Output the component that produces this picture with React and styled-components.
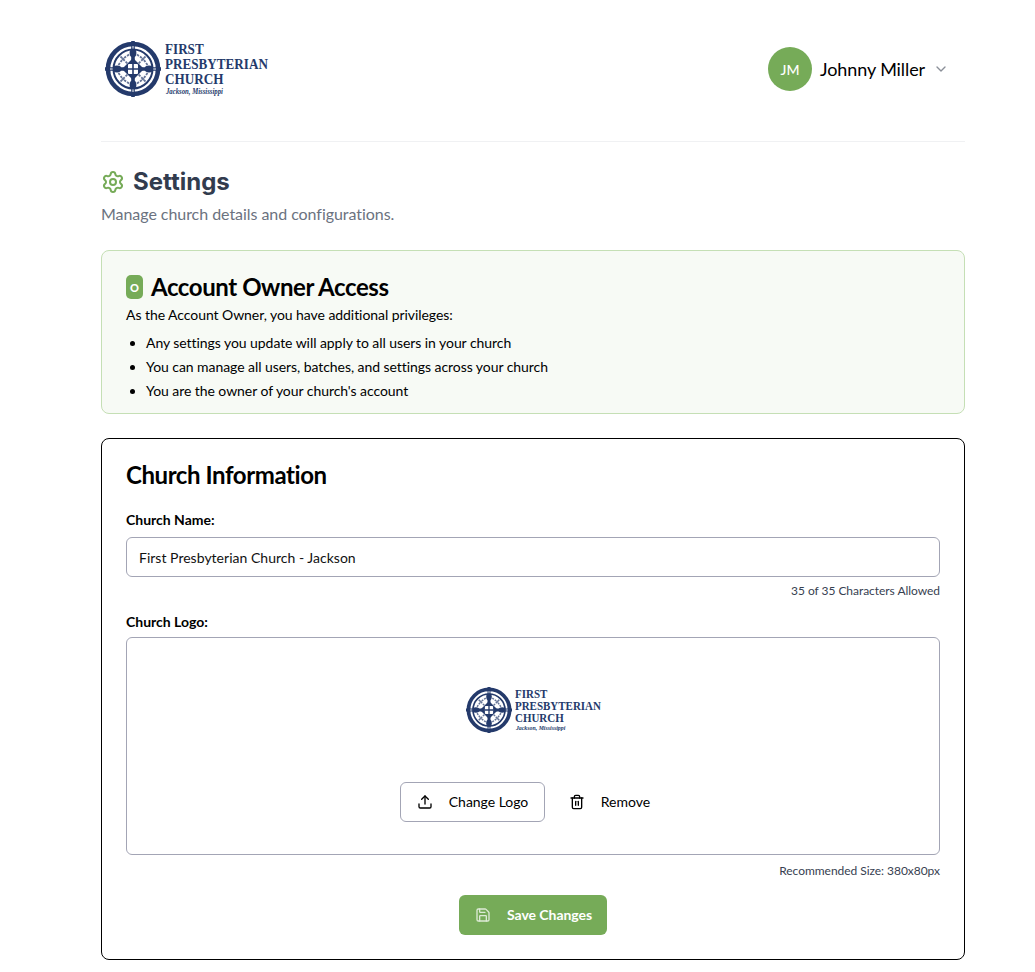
import React from 'react';
import styled, { createGlobalStyle } from 'styled-components';
import { ChevronDown, Settings as SettingsIcon, Upload, Trash2, Save } from 'lucide-react';

const GlobalStyle = createGlobalStyle`
  html, body {
    margin: 0;
    padding: 0;
    background: #fff;
    font-family: Lato, "Liberation Sans", sans-serif;
    color: #000;
  }
  * {
    box-sizing: border-box;
  }
`;

const Page = styled.div`
  width: 864px;
  margin-left: 101px;
  padding-bottom: 12px;
`;

const Header = styled.header`
  height: 142px;
  display: flex;
  align-items: flex-start;
  justify-content: space-between;
  border-bottom: 1px solid #f0f1f3;
  padding: 41px 16px 0 4px;
`;

const UserMenu = styled.div`
  display: flex;
  align-items: center;
  margin-top: 6px;
  color: #000;
`;

const Avatar = styled.div`
  width: 44px;
  height: 44px;
  border-radius: 50%;
  background: #76ab58;
  color: #fff;
  font-size: 14px;
  font-weight: 500;
  display: flex;
  align-items: center;
  justify-content: center;
`;

const UserName = styled.span`
  font-size: 18px;
  margin: 0 8px 0 8px;
  letter-spacing: -0.1px;
`;

const Chevron = styled(ChevronDown)`
  color: #8a8f98;
`;

const LogoRow = styled.div`
  display: flex;
  align-items: center;
  gap: ${p => p.$small ? 3 : 4}px;
  width: ${p => p.$small ? 135 : 170}px;
`;

const LogoText = styled.div`
  font-family: "Liberation Serif", serif;
  font-weight: 700;
  color: #243a6b;
  font-size: ${p => p.$small ? 12.2 : 14.6}px;
  line-height: ${p => p.$small ? 12 : 15}px;
  transform-origin: left center;
  transform: scaleX(0.9);
  white-space: nowrap;
`;

const LogoLine = styled.div``;

const LogoPlace = styled.div`
  font-family: "Liberation Serif", serif;
  font-style: italic;
  font-size: ${p => p.$small ? 6.5 : 7.5}px;
  line-height: ${p => p.$small ? 8 : 9}px;
  padding-left: 1px;
`;

const EmblemSvg = styled.svg`
  flex-shrink: 0;
`;

const Emblem = ({ size }) => (
  <EmblemSvg width={size} height={size} viewBox="0 0 56 56" fill="none">
    <circle cx="28" cy="28" r="25" stroke="#243a6b" strokeWidth="4.6" />
    <circle cx="28" cy="28" r="19.5" stroke="#243a6b" strokeWidth="2" />
    <g stroke="#243a6b" strokeWidth="1.8" strokeDasharray="2.4 1.2" opacity="0.7">
      <path d="M15.5 15.5l8 8M40.5 15.5l-8 8M15.5 40.5l8-8M40.5 40.5l-8-8" />
      <path d="M13.5 24l5-7M24 13.5l-7 5M32 13.5l7 5M42.5 24l-5-7M13.5 32l5 7M24 42.5l-7-5M32 42.5l7-5M42.5 32l-5 7" />
    </g>
    <path d="M28 0v56M0 28h56" stroke="#243a6b" strokeWidth="3.6" />
    <path d="M28 5v3M28 48v3M5 28h3M48 28h3" stroke="#fff" strokeWidth="1" />
    <ellipse cx="28" cy="12" rx="3.4" ry="4.4" fill="#243a6b" />
    <ellipse cx="28" cy="44" rx="3.4" ry="4.4" fill="#243a6b" />
    <ellipse cx="12" cy="28" rx="4.4" ry="3.4" fill="#243a6b" />
    <ellipse cx="44" cy="28" rx="4.4" ry="3.4" fill="#243a6b" />
    <path d="M28 17l11 11-11 11-11-11z" fill="#243a6b" />
    <rect x="23" y="23" width="10" height="10" rx="1" fill="#fff" />
    <path d="M28 23v10M23 28h10" stroke="#243a6b" strokeWidth="1.6" />
  </EmblemSvg>
);

const ChurchLogo = ({ small }) => (
  <LogoRow $small={small}>
    <Emblem size={small ? 46 : 56} />
    <LogoText $small={small}>
      <LogoLine>FIRST</LogoLine>
      <LogoLine>PRESBYTERIAN</LogoLine>
      <LogoLine>CHURCH</LogoLine>
      <LogoPlace $small={small}>Jackson, Mississippi</LogoPlace>
    </LogoText>
  </LogoRow>
);

const TitleRow = styled.div`
  display: flex;
  align-items: center;
  gap: 8px;
  margin-top: 24px;
`;

const Title = styled.h1`
  margin: 0;
  font-family: Inter, sans-serif;
  font-size: 24px;
  line-height: 32px;
  font-weight: 700;
  color: #323c4e;
`;

const GearIcon = styled(SettingsIcon)`
  color: #76ab58;
`;

const Subtitle = styled.p`
  margin: 4px 0 0;
  font-size: 16px;
  line-height: 24px;
  letter-spacing: -0.05px;
  color: #6b7280;
`;

const Notice = styled.section`
  margin-top: 24px;
  height: 164px;
  padding: 20px 24px 0;
  background: #f7faf5;
  border: 1px solid #c5dfb5;
  border-radius: 8px;
`;

const NoticeHeading = styled.div`
  display: flex;
  align-items: center;
  gap: 8px;
`;

const OwnerBadge = styled.span`
  width: 17px;
  height: 24px;
  border-radius: 5px;
  background: #76ab58;
  color: #fff;
  font-size: 11px;
  font-weight: 900;
  display: flex;
  align-items: center;
  justify-content: center;
`;

const SectionTitle = styled.h2`
  margin: 0;
  font-size: 24px;
  line-height: 32px;
  font-weight: 700;
  letter-spacing: -0.42px;
`;

const NoticeText = styled.p`
  margin: 0;
  font-size: 14px;
  line-height: 24px;
  letter-spacing: -0.06px;
`;

const NoticeList = styled.ul`
  margin: 4px 0 0;
  padding-left: 20px;
  font-size: 14px;
  line-height: 24px;
  letter-spacing: -0.06px;
`;

const Card = styled.section`
  margin-top: 24px;
  height: 522px;
  padding: 20px 24px 0;
  border: 1px solid #000;
  border-radius: 8px;
`;

const FieldLabel = styled.div`
  font-size: 14px;
  line-height: 20px;
  font-weight: 700;
  margin-top: ${p => p.$top}px;
`;

const TextInput = styled.div`
  margin-top: 7px;
  height: 40px;
  border: 1px solid #a3a5b5;
  border-radius: 6px;
  padding: 0 12px;
  display: flex;
  align-items: center;
  font-size: 14px;
  letter-spacing: 0.02px;
  color: #111;
`;

const Hint = styled.div`
  margin-top: ${p => p.$top}px;
  text-align: right;
  font-size: 12px;
  line-height: 16px;
  letter-spacing: -0.04px;
  color: #374151;
`;

const LogoBox = styled.div`
  margin-top: 5px;
  height: 218px;
  border: 1px solid #a3a5b5;
  border-radius: 6px;
  padding-top: 49px;
  display: flex;
  flex-direction: column;
  align-items: center;
`;

const LogoActions = styled.div`
  display: flex;
  align-items: center;
  margin-top: 49px;
  padding-right: 16px;
`;

const OutlineButton = styled.div`
  width: 145px;
  height: 40px;
  border: 1px solid #a3a5b5;
  border-radius: 6px;
  display: flex;
  align-items: center;
  padding-left: 16px;
  gap: 16px;
  font-size: 14px;
  letter-spacing: -0.03px;
`;

const GhostButton = styled.div`
  display: flex;
  align-items: center;
  padding-left: 24px;
  gap: 16px;
  font-size: 14px;
`;

const ButtonLabel = styled.span`
  margin-bottom: 2px;
`;

const SaveRow = styled.div`
  display: flex;
  justify-content: center;
  margin-top: 16px;
`;

const SaveButton = styled.div`
  width: 148px;
  height: 40px;
  border-radius: 6px;
  background: #76ab58;
  color: #fff;
  font-size: 14px;
  font-weight: 700;
  letter-spacing: -0.05px;
  display: flex;
  align-items: center;
  padding-left: 16px;
  gap: 16px;
`;

const SaveIcon = styled(Save)`
  opacity: 0.75;
`;

export default function App() {
  return (
    <Page>
      <GlobalStyle />
      <Header>
        <ChurchLogo />
        <UserMenu>
          <Avatar>JM</Avatar>
          <UserName>Johnny Miller</UserName>
          <Chevron size={16} />
        </UserMenu>
      </Header>

      <TitleRow>
        <GearIcon size={24} />
        <Title>Settings</Title>
      </TitleRow>
      <Subtitle>Manage church details and configurations.</Subtitle>

      <Notice>
        <NoticeHeading>
          <OwnerBadge>O</OwnerBadge>
          <SectionTitle>Account Owner Access</SectionTitle>
        </NoticeHeading>
        <NoticeText>As the Account Owner, you have additional privileges:</NoticeText>
        <NoticeList>
          <li>Any settings you update will apply to all users in your church</li>
          <li>You can manage all users, batches, and settings across your church</li>
          <li>You are the owner of your church's account</li>
        </NoticeList>
      </Notice>

      <Card>
        <SectionTitle>Church Information</SectionTitle>
        <FieldLabel $top={19}>Church Name:</FieldLabel>
        <TextInput>First Presbyterian Church - Jackson</TextInput>
        <Hint $top={6}>35 of 35 Characters Allowed</Hint>
        <FieldLabel $top={13}>Church Logo:</FieldLabel>
        <LogoBox>
          <ChurchLogo small />
          <LogoActions>
            <OutlineButton>
              <Upload size={16} />
              <ButtonLabel>Change Logo</ButtonLabel>
            </OutlineButton>
            <GhostButton>
              <Trash2 size={16} />
              <ButtonLabel>Remove</ButtonLabel>
            </GhostButton>
          </LogoActions>
        </LogoBox>
        <Hint $top={8}>Recommended Size: 380x80px</Hint>
        <SaveRow>
          <SaveButton>
            <SaveIcon size={16} />
            <ButtonLabel>Save Changes</ButtonLabel>
          </SaveButton>
        </SaveRow>
      </Card>
    </Page>
  );
}
